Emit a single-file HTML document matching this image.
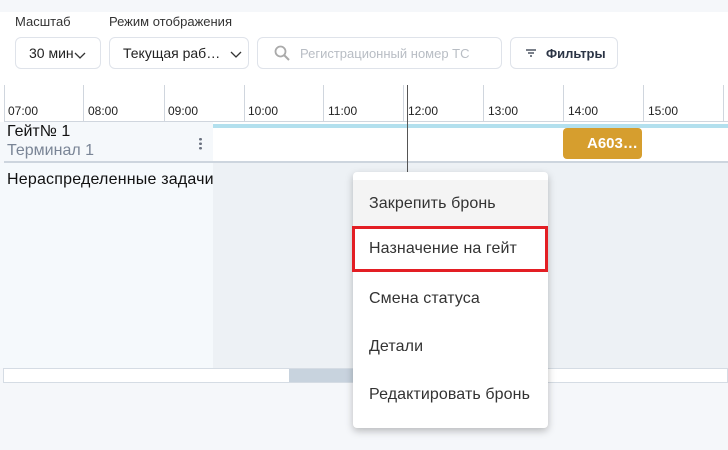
<!DOCTYPE html>
<html><head><meta charset="utf-8"><style>
*{box-sizing:border-box;margin:0;padding:0}
body{width:728px;height:450px;overflow:hidden;background:#f5f7fa;font-family:"Liberation Sans","Noto Sans CJK SC",sans-serif;position:relative}
.a{position:absolute}
.box{position:absolute;border:1px solid #dfe3ea;border-radius:6px;background:#fff;height:32px;top:37px;font-size:14px;color:#222;display:flex;align-items:center}
.lbl{font-size:13px;color:#333;top:14px}
.t{position:absolute;top:104px;font-size:12px;color:#222}
.vl{position:absolute;top:85px;height:36px;width:1px;background:#d0d6de}
.mi{position:absolute;left:353px;width:195px;height:48px;font-size:16px;letter-spacing:0.1px;color:#333;padding-left:16px;display:flex;align-items:center}
</style></head><body>
<div class="a" style="left:0;top:12px;width:728px;height:110px;background:#fff"></div>
<div class="a lbl" style="left:15px">Масштаб</div>
<div class="a lbl" style="left:109px">Режим отображения</div>
<div class="box" style="left:15px;width:86px;padding-left:13px">30 мин<svg width="12" height="8" style="margin-top:6px"><path d="M1 1l5 5 5-5" stroke="#333" fill="none" stroke-width="1.3"/></svg></div>
<div class="box" style="left:109px;width:140px;padding-left:13px">Текущая раб…<svg width="12" height="8" style="margin-left:10px;margin-top:4px"><path d="M1 1l5 5 5-5" stroke="#333" fill="none" stroke-width="1.3"/></svg></div>
<div class="box" style="left:257px;width:245px;padding-left:16px;color:#b8bdc4;font-size:13px"><svg width="16" height="16" style="margin-right:10px"><circle cx="6.5" cy="6.5" r="5" stroke="#aaa" stroke-width="1.8" fill="none"/><path d="M10 10l5 5" stroke="#aaa" stroke-width="2"/></svg>Регистрационный номер ТС</div>
<div class="box" style="left:510px;width:108px;padding-left:14px;font-weight:bold;font-size:13px;color:#2b3445"><svg width="12" height="10" style="margin-right:9px"><path d="M1 2h10M3 5h6M5 8h2" stroke="#2b3445" stroke-width="1.3"/></svg>Фильтры</div>
<div class="a" style="left:4px;top:121px;width:724px;height:1px;background:#d0d6de"></div>
<div class="vl" style="left:4px"></div><div class="vl" style="left:83px"></div><div class="vl" style="left:164px"></div><div class="vl" style="left:244px"></div><div class="vl" style="left:323px"></div><div class="vl" style="left:403px"></div><div class="vl" style="left:483px"></div><div class="vl" style="left:563px"></div><div class="vl" style="left:643px"></div><div class="vl" style="left:723px"></div>
<div class="t" style="left:8px">07:00</div><div class="t" style="left:88px">08:00</div><div class="t" style="left:168px">09:00</div><div class="t" style="left:248px">10:00</div><div class="t" style="left:328px">11:00</div><div class="t" style="left:408px">12:00</div><div class="t" style="left:488px">13:00</div><div class="t" style="left:568px">14:00</div><div class="t" style="left:648px">15:00</div>
<div class="a" style="left:0;top:122px;width:728px;height:40px;background:#fff"></div>
<div class="a" style="left:0;top:122px;width:213px;height:40px;background:#f5f8fb"></div>
<div class="a" style="left:213px;top:124px;width:515px;height:4px;background:#b3e0ee"></div>
<div class="a" style="left:7px;top:123px;font-size:16px;color:#111">Гейт№ 1</div>
<div class="a" style="left:7px;top:142px;font-size:16px;color:#7a8596">Терминал 1</div>
<div class="a" style="left:199px;top:137px;width:3px;height:13px;background:radial-gradient(circle,#6b7280 1.3px,transparent 1.5px) 0 0/3px 4.5px"></div>
<div class="a" style="left:563px;top:128px;width:79px;height:31px;background:#d69e2e;border-radius:4px;color:#fff;font-weight:bold;font-size:15px;padding-left:24px;line-height:31px">A603…</div>
<div class="a" style="left:4px;top:161px;width:724px;height:2px;background:#cdd5de"></div>
<div class="a" style="left:0;top:163px;width:213px;height:205px;background:#f5f9fc"></div>
<div class="a" style="left:213px;top:163px;width:515px;height:205px;background:#edf1f5"></div>
<div class="a" style="left:7px;top:171px;font-size:16px;letter-spacing:0.2px;color:#111">Нераспределенные задачи</div>
<div class="a" style="left:407px;top:85px;width:1px;height:88px;background:#555"></div>
<div class="a" style="left:3px;top:368px;width:725px;height:15px;background:#fff;border:1px solid #d5dce4"></div>
<div class="a" style="left:289px;top:369px;width:80px;height:13px;background:#c8d3de"></div>
<div class="a" style="left:353px;top:172px;width:195px;height:256px;background:#fff;border-radius:4px;box-shadow:0 3px 8px rgba(0,0,0,.25)"></div>
<div class="mi" style="top:180px;background:#f4f4f4">Закрепить бронь</div>
<div class="mi" style="top:226px;left:352px;width:196px;border:3px solid #e31e24;padding-left:14px;height:46px">Назначение на гейт</div>
<div class="mi" style="top:275px">Смена статуса</div>
<div class="mi" style="top:323px">Детали</div>
<div class="mi" style="top:371px">Редактировать бронь</div>
</body></html>
